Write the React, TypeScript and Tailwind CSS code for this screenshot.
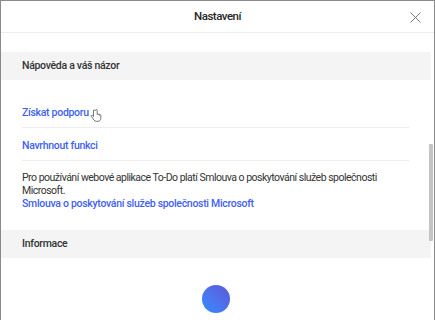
import React from "react";

export default function App() {
  const font = { fontFamily: 'Roboto, "Noto Sans", sans-serif' };
  return (
    <div className="w-[435px] h-[320px] overflow-hidden bg-white relative" style={font}>
      <div className="h-full border-t border-l border-r border-[#8a8a8a] flex flex-col">
        <div className="h-[32px] shrink-0 flex items-center justify-center relative border-b border-[#ececec]">
          <span className="text-[11.5px] text-[#262626] font-medium tracking-[-0.5px]">Nastavení</span>
          <svg className="absolute right-[13px] top-[11px]" width="11" height="11" viewBox="0 0 11 11">
            <path d="M0.5 0.5 L10.5 10.5 M10.5 0.5 L0.5 10.5" stroke="#777" strokeWidth="1" fill="none" />
          </svg>
        </div>
        <div className="flex-1 flex relative">
          <div className="flex-1 pr-[3px]">
            <div className="h-[19px]" />
            <div className="h-[28px] bg-[#f4f4f4] flex items-center pl-[21px]">
              <span className="text-[10.5px] font-medium text-[#333] tracking-[-0.3px]">Nápověda a váš názor</span>
            </div>
            <div className="pl-[21px] pr-[22px]">
              <div className="h-[19px]" />
              <div className="h-[29px] flex items-center border-b border-[#ededed]">
                <span className="text-[10.5px] font-medium text-[#3f5ff0] tracking-[-0.3px]">Získat podporu</span>
                <svg width="12" height="14" viewBox="0 0 12 14" className="ml-[1px] mt-[6px]">
                  <path d="M3.5 1.2 v6.5 l-1.2-1.2 c-0.6-0.5-1.6 0.1-1 0.9 l2.6 3.6 c0.6 0.8 1.4 1.3 2.6 1.3 h1.5 c1.8 0 2.8-1.3 2.8-3 v-3 c0-0.8-1.2-0.8-1.2 0 v-0.6 c0-0.8-1.2-0.8-1.2 0 v-0.3 c0-0.8-1.2-0.8-1.2 0 v-4.2 c0-0.9-1.3-0.9-1.3 0 z" fill="#fff" stroke="#555" strokeWidth="0.8" />
                </svg>
              </div>
              <div className="h-[33px] pt-[4px] flex items-center border-b border-[#ededed]">
                <span className="text-[10.5px] font-medium text-[#3f5ff0] tracking-[-0.3px]">Navrhnout funkci</span>
              </div>
              <div className="pt-[10px] text-[10.5px] leading-[13px] text-[#333] tracking-[-0.5px] pr-[8px]">
                Pro používání webové aplikace To-Do platí Smlouva o poskytování služeb společnosti Microsoft.
              </div>
              <div className="text-[10.5px] leading-[13px] font-medium text-[#3f5ff0] tracking-[-0.3px]">
                Smlouva o poskytování služeb společnosti Microsoft
              </div>
            </div>
            <div className="h-[20px]" />
            <div className="h-[28px] bg-[#f4f4f4] flex items-center pl-[21px]">
              <span className="text-[10.5px] font-medium text-[#333] tracking-[-0.3px]">Informace</span>
            </div>
            <div className="flex justify-center pt-[27px]">
              <div className="w-[28px] h-[28px] rounded-full bg-gradient-to-tr from-[#2d8cff] to-[#5b57d8]" />
            </div>
          </div>
          <div className="absolute right-[1px] top-[111px] w-[4px] h-[97px] bg-[#c4c4c4] rounded-[1px]" />
        </div>
      </div>
    </div>
  );
}
